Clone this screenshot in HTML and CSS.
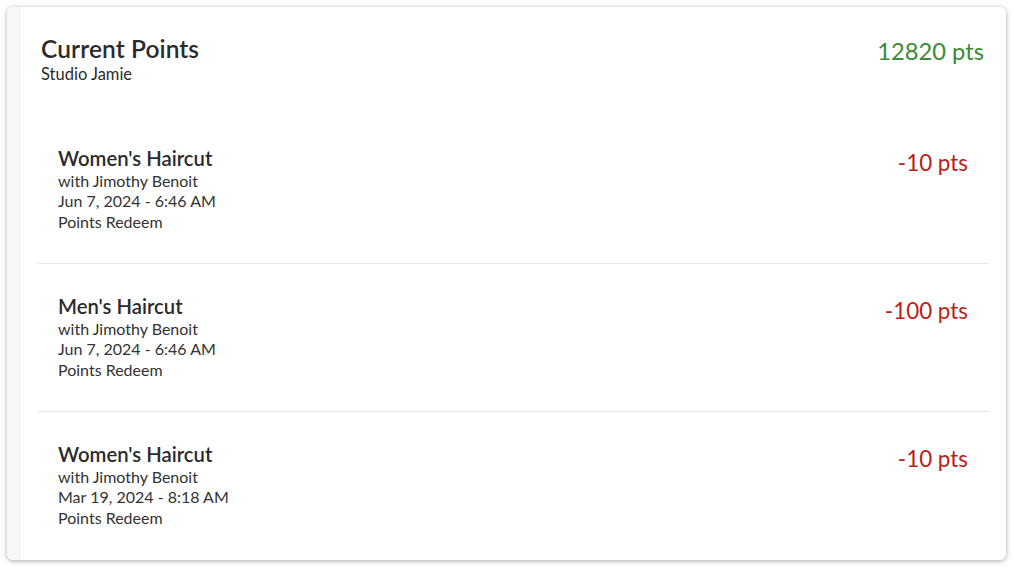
FILE: index.html
```html
<!DOCTYPE html>
<html lang="en">
<head>
  <meta charset="UTF-8" />
  <meta name="viewport" content="width=device-width, initial-scale=1.0"/>
  <title>Current Points</title>
  <link rel="stylesheet" href="styles.css">
</head>
<body>
  <div class="points-card">
    <div class="side-strip"></div>
    <div class="points-main">
      <div class="points-header">
        <div>
          <h1>Current Points</h1>
          <div class="studio-name">Studio Jamie</div>
        </div>
        <div class="points-total">12820 pts</div>
      </div>

      <ul class="history-list">
        <li class="history-item">
          <div class="history-info">
            <div class="service">Women's Haircut</div>
            <div>with Jimothy Benoit</div>
            <div>Jun 7, 2024 - 6:46 AM</div>
            <div>Points Redeem</div>
          </div>
          <div class="amount negative">-10 pts</div>
        </li>
        <li class="history-item">
          <div class="history-info">
            <div class="service">Men's Haircut</div>
            <div>with Jimothy Benoit</div>
            <div>Jun 7, 2024 - 6:46 AM</div>
            <div>Points Redeem</div>
          </div>
          <div class="amount negative">-100 pts</div>
        </li>
        <li class="history-item">
          <div class="history-info">
            <div class="service">Women's Haircut</div>
            <div>with Jimothy Benoit</div>
            <div>Mar 19, 2024 - 8:18 AM</div>
            <div>Points Redeem</div>
          </div>
          <div class="amount negative">-10 pts</div>
        </li>
      </ul>
    </div>
  </div>
</body>
</html>
```

FILE: styles.css
```css
body {
  font-family: Lato, 'Open Sans', Arial, sans-serif;
  background-color: #fff;
  color: #2b2b2b;
  margin: 0;
  padding: 7px;
}

.points-card {
  display: flex;
  width: 999px;
  height: 553px;
  background-color: #fff;
  border-radius: 6px;
  box-shadow: 0 1px 5px rgba(0,0,0,0.35);
  overflow: hidden;
}

.side-strip {
  width: 14px;
  flex-shrink: 0;
  background-color: #f7f7f7;
}

.points-main {
  flex: 1;
  padding: 0 17px;
}

.points-header {
  display: flex;
  justify-content: space-between;
  align-items: flex-start;
  padding: 28px 5px 0 3px;
}

.points-header h1 {
  margin: 0;
  font-size: 24.5px;
  line-height: 28px;
  font-weight: 600;
  letter-spacing: 0.1px;
}

.studio-name {
  margin-top: 1px;
  font-size: 16.5px;
  line-height: 20px;
}

.points-total {
  margin-top: 2px;
  font-size: 23.7px;
  line-height: 28px;
  color: #3b8a34;
}

.history-list {
  list-style: none;
  margin: 32px 0 0;
  padding: 0;
}

.history-item {
  display: flex;
  justify-content: space-between;
  align-items: flex-start;
  padding: 29.5px 21px 31px 20px;
  border-bottom: 1px solid #e6e6e6;
  font-size: 16px;
  line-height: 20.5px;
  color: #333;
}

.history-item:last-child {
  border-bottom: none;
}

.service {
  font-size: 20.3px;
  line-height: 25px;
  font-weight: 600;
  color: #2b2b2b;
}

.amount {
  margin-top: 3px;
  font-size: 22.4px;
  line-height: 27px;
}

.negative {
  color: #bb1e16;
}
```
